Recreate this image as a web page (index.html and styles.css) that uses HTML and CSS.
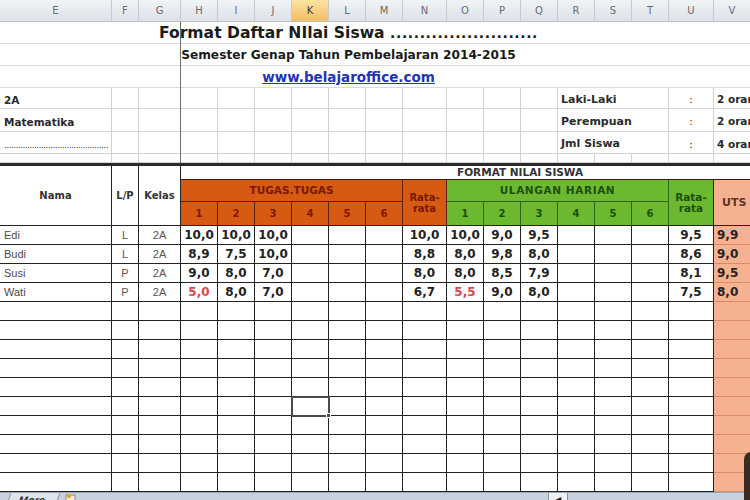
FILE: index.html
```html
<!DOCTYPE html>
<html lang="id">
<head>
<meta charset="utf-8">
<title>Format Daftar Nilai Siswa</title>
<link rel="stylesheet" href="styles.css">
</head>
<body>
<div class="sheet">
  <div class="grid colhead">
    <span>E</span><span>F</span><span>G</span><span>H</span><span>I</span><span>J</span><span class="act">K</span><span>L</span><span>M</span><span>N</span><span>O</span><span>P</span><span>Q</span><span>R</span><span>S</span><span>T</span><span>U</span><span>V</span>
  </div>

  <div class="trow t1">Format Daftar NIlai Siswa&nbsp;<span class="tdots">.........................</span></div>
  <div class="trow t2">Semester Genap Tahun Pembelajaran 2014-2015</div>
  <div class="trow t3"><a>www.belajaroffice.com</a></div>

  <div class="grid info">
    <b class="first">2A</b><i></i><i></i><i></i><i></i><i></i><i></i><i></i><i></i><i></i><i></i><i></i><i></i><b class="lbl">Laki-Laki</b><b class="colon">:</b><b class="val">2 orang</b>
    <b class="first">Matematika</b><i></i><i></i><i></i><i></i><i></i><i></i><i></i><i></i><i></i><i></i><i></i><i></i><b class="lbl">Perempuan</b><b class="colon">:</b><b class="val">2 orang</b>
    <b class="first dots">.............................................</b><i></i><i></i><i></i><i></i><i></i><i></i><i></i><i></i><i></i><i></i><i></i><i></i><b class="lbl">Jml Siswa</b><b class="colon">:</b><b class="val">4 orang</b>
    <i></i><i></i><i></i><i></i><i></i><i></i><i></i><i></i><i></i><i></i><i></i><i></i><i></i><i></i><i></i><i></i><i></i><i></i>
  </div>

  <div class="grid thead">
    <div class="hc h-nama">Nama</div>
    <div class="hc h-lp">L/P</div>
    <div class="hc h-kelas">Kelas</div>
    <div class="h-format">FORMAT NILAI SISWA</div>
    <div class="og h-tugas">TUGAS.TUGAS</div>
    <div class="og h-rt">Rata-<br>rata</div>
    <div class="gr h-ul">ULANGAN HARIAN</div>
    <div class="gr h-ru">Rata-<br>rata</div>
    <div class="sal h-uts">UTS</div>
    <div class="og num">1</div><div class="og num">2</div><div class="og num">3</div><div class="og num">4</div><div class="og num">5</div><div class="og num">6</div>
    <div class="gr num">1</div><div class="gr num">2</div><div class="gr num">3</div><div class="gr num">4</div><div class="gr num">5</div><div class="gr num">6</div>
  </div>

  <div class="grid tbody">
    <i>Edi</i><i>L</i><i>2A</i><i>10,0</i><i>10,0</i><i>10,0</i><i></i><i></i><i></i><i>10,0</i><i>10,0</i><i>9,0</i><i>9,5</i><i></i><i></i><i></i><i>9,5</i><i>9,9</i>
    <i>Budi</i><i>L</i><i>2A</i><i>8,9</i><i>7,5</i><i>10,0</i><i></i><i></i><i></i><i>8,8</i><i>8,0</i><i>9,8</i><i>8,0</i><i></i><i></i><i></i><i>8,6</i><i>9,0</i>
    <i>Susi</i><i>P</i><i>2A</i><i>9,0</i><i>8,0</i><i>7,0</i><i></i><i></i><i></i><i>8,0</i><i>8,0</i><i>8,5</i><i>7,9</i><i></i><i></i><i></i><i>8,1</i><i>9,5</i>
    <i>Wati</i><i>P</i><i>2A</i><i class="red">5,0</i><i>8,0</i><i>7,0</i><i></i><i></i><i></i><i>6,7</i><i class="red">5,5</i><i>9,0</i><i>8,0</i><i></i><i></i><i></i><i>7,5</i><i>8,0</i>
    <i></i><i></i><i></i><i></i><i></i><i></i><i></i><i></i><i></i><i></i><i></i><i></i><i></i><i></i><i></i><i></i><i></i><i></i>
    <i></i><i></i><i></i><i></i><i></i><i></i><i></i><i></i><i></i><i></i><i></i><i></i><i></i><i></i><i></i><i></i><i></i><i></i>
    <i></i><i></i><i></i><i></i><i></i><i></i><i></i><i></i><i></i><i></i><i></i><i></i><i></i><i></i><i></i><i></i><i></i><i></i>
    <i></i><i></i><i></i><i></i><i></i><i></i><i></i><i></i><i></i><i></i><i></i><i></i><i></i><i></i><i></i><i></i><i></i><i></i>
    <i></i><i></i><i></i><i></i><i></i><i></i><i></i><i></i><i></i><i></i><i></i><i></i><i></i><i></i><i></i><i></i><i></i><i></i>
    <i></i><i></i><i></i><i></i><i></i><i></i><i class="sel"></i><i></i><i></i><i></i><i></i><i></i><i></i><i></i><i></i><i></i><i></i><i></i>
    <i></i><i></i><i></i><i></i><i></i><i></i><i></i><i></i><i></i><i></i><i></i><i></i><i></i><i></i><i></i><i></i><i></i><i></i>
    <i></i><i></i><i></i><i></i><i></i><i></i><i></i><i></i><i></i><i></i><i></i><i></i><i></i><i></i><i></i><i></i><i></i><i></i>
    <i></i><i></i><i></i><i></i><i></i><i></i><i></i><i></i><i></i><i></i><i></i><i></i><i></i><i></i><i></i><i></i><i></i><i></i>
    <i></i><i></i><i></i><i></i><i></i><i></i><i></i><i></i><i></i><i></i><i></i><i></i><i></i><i></i><i></i><i></i><i></i><i></i>
  </div>

  <div class="tabs">
    <span class="tab">More</span>
    <span class="tabicon">
      <svg width="14" height="10" viewBox="0 0 14 10"><rect x="2" y="2" width="9" height="8" fill="#f3efe2" stroke="#9a8a60" stroke-width="1"/><circle cx="5" cy="3" r="2.2" fill="#e7a23a"/></svg>
    </span>
    <span class="scroll"><span class="arrow">◂</span></span>
  </div>

  <div class="freeze"></div>
  <div class="handle"></div>
  <div class="corner"></div>
</div>
</body>
</html>
```

FILE: styles.css
```css
* {
  box-sizing: border-box;
  margin: 0;
  padding: 0;
}

html,
body {
  width: 750px;
  height: 500px;
  overflow: hidden;
  background: #fff;
}

body {
  font-family: "DejaVu Sans", sans-serif;
  color: #222;
}

.sheet {
  position: relative;
  width: 750px;
  height: 500px;
  overflow: hidden;
  --cols: 112px 27px 42px 37px 37px 37px 37px 37px 37px 44px 37px 37px 37px 37px 37px 37px 45px 37px;
}

.grid {
  display: grid;
  grid-template-columns: var(--cols);
  width: 751px;
}

/* column letters */
.colhead {
  height: 22px;
  background: linear-gradient(#f1f3f6, #dde2e9);
  border-bottom: 1px solid #b8bfc9;
}

.colhead span {
  display: flex;
  align-items: center;
  justify-content: center;
  border-right: 1px solid #c4cad2;
  font-size: 10px;
  color: #6b6b6b;
}

.colhead .act {
  background: linear-gradient(#fce3a3, #f3bd62);
  color: #3a3a3a;
}

/* title rows */
.trow {
  height: 22px;
  border-bottom: 1px solid #dadada;
  display: flex;
  align-items: center;
  justify-content: center;
  padding-right: 53px;
  font-weight: bold;
  white-space: nowrap;
}

.t1 {
  font-size: 15.6px;
  color: #1b1b1b;
  padding-top: 1px;
}

.tdots {
  font-size: 14px;
  letter-spacing: 0.6px;
}

.t2 {
  font-size: 12.2px;
  color: #1b1b1b;
}

.t3 a {
  font-size: 13.5px;
  color: #2233b5;
  text-decoration: underline;
}

/* info block */
.info {
  grid-template-rows: 21px 23px 22px 9px;
}

.info > * {
  border-right: 1px solid #d3d3d3;
  border-bottom: 1px solid #d3d3d3;
  font-style: normal;
  font-size: 10.5px;
  color: #2a2a2a;
  display: flex;
  align-items: center;
  white-space: nowrap;
  overflow: hidden;
}

.info .first {
  padding-left: 4px;
  padding-top: 3px;
}

.info .dots {
  font-weight: normal;
  font-size: 9px;
  color: #444;
  letter-spacing: -0.55px;
  align-items: flex-end;
  padding-bottom: 3px;
}

.info .lbl {
  grid-column: span 3;
  padding-left: 3px;
  padding-top: 2px;
  font-size: 11px;
}

.info .colon {
  justify-content: center;
  font-weight: normal;
  padding-top: 2px;
}

.info .val {
  padding-left: 3px;
  padding-top: 2px;
  border-right: 0;
}

/* table head */
.thead {
  grid-template-rows: 14px 22px 24px;
  border-top: 3px solid #2b2b2b;
}

.thead > div {
  display: flex;
  align-items: center;
  justify-content: center;
  text-align: center;
  font-weight: bold;
  font-size: 10px;
  line-height: 11px;
}

.hc {
  grid-row: 1 / 4;
  border-right: 1px solid #222;
  border-bottom: 1px solid #222;
  font-size: 10.5px;
  color: #333;
}

.h-nama { grid-column: 1; }
.h-lp { grid-column: 2; }
.h-kelas { grid-column: 3; }

.thead .h-format {
  grid-column: 4 / -1;
  grid-row: 1;
  justify-content: flex-start;
  padding-left: 276px;
  font-size: 10.5px;
  color: #333;
  border-bottom: 1px solid #3a1a0a;
}

.og {
  background: #d65a12;
  color: #7a1800;
  border-right: 1px solid #5a2208;
  border-bottom: 1px solid #5a2208;
}

.gr {
  background: #6cb92f;
  color: #1c4f0e;
  border-right: 1px solid #2e6419;
  border-bottom: 1px solid #2e6419;
}

.sal {
  background: #f6b190;
  color: #5b3524;
  border-bottom: 1px solid #222;
}

.thead .h-tugas { grid-column: 4 / 10; grid-row: 2; font-size: 10.5px; }
.thead .h-rt { grid-column: 10; grid-row: 2 / 4; border-bottom-color: #222; }
.thead .h-ul { grid-column: 11 / 17; grid-row: 2; font-size: 10.5px; letter-spacing: 0.6px; }
.thead .h-ru { grid-column: 17; grid-row: 2 / 4; border-right-color: #222; border-bottom-color: #222; font-size: 10.5px; }
.thead .h-uts { grid-column: 18; grid-row: 2 / 4; font-size: 11px; justify-content: flex-start; padding-left: 8px; }

.thead .num {
  border-bottom-color: #222;
}

/* body */
.tbody {
  grid-auto-rows: 19px;
}

.tbody > i {
  font-style: normal;
  border-right: 1px solid #222;
  border-bottom: 1px solid #222;
  display: flex;
  align-items: center;
  justify-content: center;
  font-weight: bold;
  font-size: 12px;
  color: #222;
  white-space: nowrap;
}

.tbody > i:nth-child(18n+1) {
  justify-content: flex-start;
  padding-left: 4px;
  font-family: "Liberation Sans", Arial, sans-serif;
  font-weight: normal;
  font-size: 11px;
  color: #4a4a4a;
}

.tbody > i:nth-child(18n+2),
.tbody > i:nth-child(18n+3) {
  font-family: "Liberation Sans", Arial, sans-serif;
  font-weight: normal;
  font-size: 11px;
  color: #555;
}

.tbody > i:nth-child(18n) {
  background: #f6b190;
  border-right: 0;
  border-bottom-color: #d98c68;
  justify-content: flex-start;
  padding-left: 3px;
}

.tbody > i.red {
  color: #d8474f;
}

.tbody > i.sel {
  outline: 2px solid #4a4a4a;
  outline-offset: -1px;
}

/* sheet tabs */
.tabs {
  height: 9px;
  background: #c8d2df;
  display: flex;
  align-items: flex-start;
  border-top: 1px solid #9aa6b5;
}

.tab {
  margin-left: 8px;
  padding: 1px 12px 0 10px;
  background: #dde4ec;
  font-family: "Liberation Sans", Arial, sans-serif;
  font-weight: bold;
  font-size: 11px;
  line-height: 12px;
  color: #333;
  border-left: 1px solid #8894a3;
  border-right: 1px solid #8894a3;
  transform: skewX(-20deg);
}

.tabicon {
  margin-left: 6px;
  display: flex;
}

.scroll {
  margin-left: 470px;
  width: 20px;
  height: 9px;
  background: #eef1f5;
  border-left: 1px solid #8894a3;
  border-right: 1px solid #8894a3;
  display: flex;
  justify-content: center;
}

.arrow {
  font-size: 12px;
  line-height: 12px;
  color: #222;
}

/* overlays */
.freeze {
  position: absolute;
  left: 180px;
  top: 22px;
  width: 1px;
  height: 141px;
  background: #6e6e6e;
}

.handle {
  position: absolute;
  left: 326px;
  top: 413px;
  width: 5px;
  height: 5px;
  background: #4a4a4a;
  border: 1px solid #fff;
}

.corner {
  position: absolute;
  left: 744px;
  top: 452px;
  width: 10px;
  height: 50px;
  background: #3b2b20;
  border-top-left-radius: 7px;
}
```
